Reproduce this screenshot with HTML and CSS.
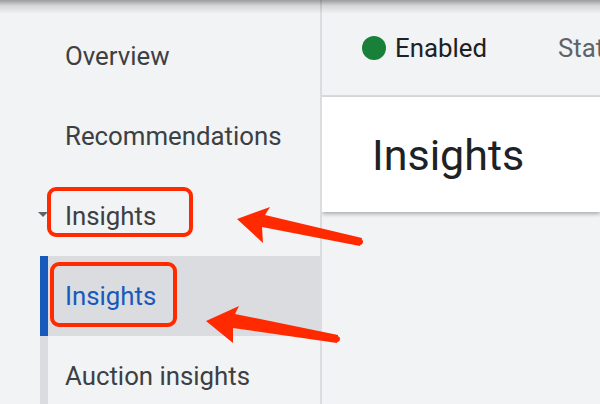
FILE: index.html
```html
<!DOCTYPE html>
<html lang="en">
<head>
    <meta charset="UTF-8">
    <meta name="viewport" content="width=device-width, initial-scale=1.0">
    <title>Insights</title>
    <link rel="stylesheet" href="styles.css">
</head>
<body>
    <div class="topshade"></div>

    <div class="layout">
        <aside class="sidebar">
            <nav class="nav">
                <a href="#" class="nav-item">Overview</a>
                <a href="#" class="nav-item">Recommendations</a>
                <a href="#" class="nav-item parent">
                    <span class="caret"></span>
                    Insights
                </a>
                <div class="subnav">
                    <a href="#" class="nav-item active">Insights</a>
                    <a href="#" class="nav-item">Auction insights</a>
                </div>
            </nav>
        </aside>

        <main class="main">
            <header class="status-bar">
                <span class="status">
                    <span class="dot"></span>
                    Enabled
                </span>
                <span class="status-label">Status</span>
            </header>
            <section class="card">
                <h1>Insights</h1>
            </section>
        </main>
    </div>

    <!-- annotation layer: boxes and arrows drawn on top of the screenshot -->
    <svg class="annotations" width="600" height="404" viewBox="0 0 600 404">
        <rect x="49" y="189" width="142" height="46" rx="7" fill="none" stroke="#ff2a00" stroke-width="4"/>
        <rect x="52" y="264" width="123" height="61" rx="7" fill="none" stroke="#ff2a00" stroke-width="4"/>

        <path d="M237 219 L270 207 L265 215 L362 238 L360 246 L262 227 L263 243 Z" fill="#ff2a00"/>
        <line x1="265" y1="222" x2="360" y2="242" stroke="#ff2a00" stroke-width="6" stroke-linecap="round"/>

        <path d="M206 321 L239 306 L235 314 L338 335 L337 343 L233 328 L233 343 Z" fill="#ff2a00"/>
        <line x1="236" y1="321" x2="337" y2="339" stroke="#ff2a00" stroke-width="6" stroke-linecap="round"/>
    </svg>
</body>
</html>
```

FILE: styles.css
```css
body {
    margin: 0;
    font-family: Roboto, "Liberation Sans", Arial, sans-serif;
    background: #f1f3f4;
    color: #3c4043;
    width: 600px;
    height: 404px;
    overflow: hidden;
    position: relative;
}

.topshade {
    position: absolute;
    top: 0;
    left: 0;
    right: 0;
    height: 14px;
    background: linear-gradient(rgba(0, 0, 0, 0.36), rgba(0, 0, 0, 0.12) 40%, rgba(0, 0, 0, 0));
    z-index: 2;
}

.layout {
    display: grid;
    grid-template-columns: 322px 1fr;
    height: 404px;
}

.sidebar {
    border-right: 2px solid #dadce0;
    background: #f1f3f4;
}

.nav {
    display: flex;
    flex-direction: column;
    padding-top: 16px;
}

.nav-item {
    display: flex;
    align-items: center;
    height: 80px;
    padding-left: 65px;
    font-size: 25.8px;
    color: #3c4043;
    text-decoration: none;
    white-space: nowrap;
}

.nav-item.parent {
    position: relative;
}

.caret {
    position: absolute;
    left: 38px;
    top: 36px;
    width: 0;
    height: 0;
    border-left: 5px solid transparent;
    border-right: 5px solid transparent;
    border-top: 5px solid #5f6368;
}

.subnav {
    margin-left: 40px;
    border-left: 8px solid #dadce0;
    display: flex;
    flex-direction: column;
}

.subnav .nav-item {
    padding-left: 17px;
}

.subnav .nav-item.active {
    margin-left: -8px;
    margin-right: -2px;
    border-left: 8px solid #185abc;
    background: #dadce0;
    color: #185abc;
}

.main {
    overflow: hidden;
    white-space: nowrap;
}

.status-bar {
    height: 95px;
    border-bottom: 2px solid #dadce0;
    display: flex;
    align-items: center;
    padding-left: 40px;
    font-size: 25.8px;
}

.status {
    display: flex;
    align-items: center;
    gap: 9px;
    color: #202124;
}

.dot {
    width: 24px;
    height: 24px;
    border-radius: 50%;
    background: #188038;
}

.status-label {
    margin-left: 71px;
    color: #5f6368;
}

.card {
    height: 115px;
    background: white;
    box-shadow: 0 2px 4px rgba(0, 0, 0, 0.3);
    display: flex;
    align-items: center;
    padding-left: 50px;
}

.card h1 {
    margin: 0;
    font-size: 43px;
    font-weight: 400;
    color: #202124;
}

.annotations {
    position: absolute;
    top: 0;
    left: 0;
    z-index: 3;
}
```
